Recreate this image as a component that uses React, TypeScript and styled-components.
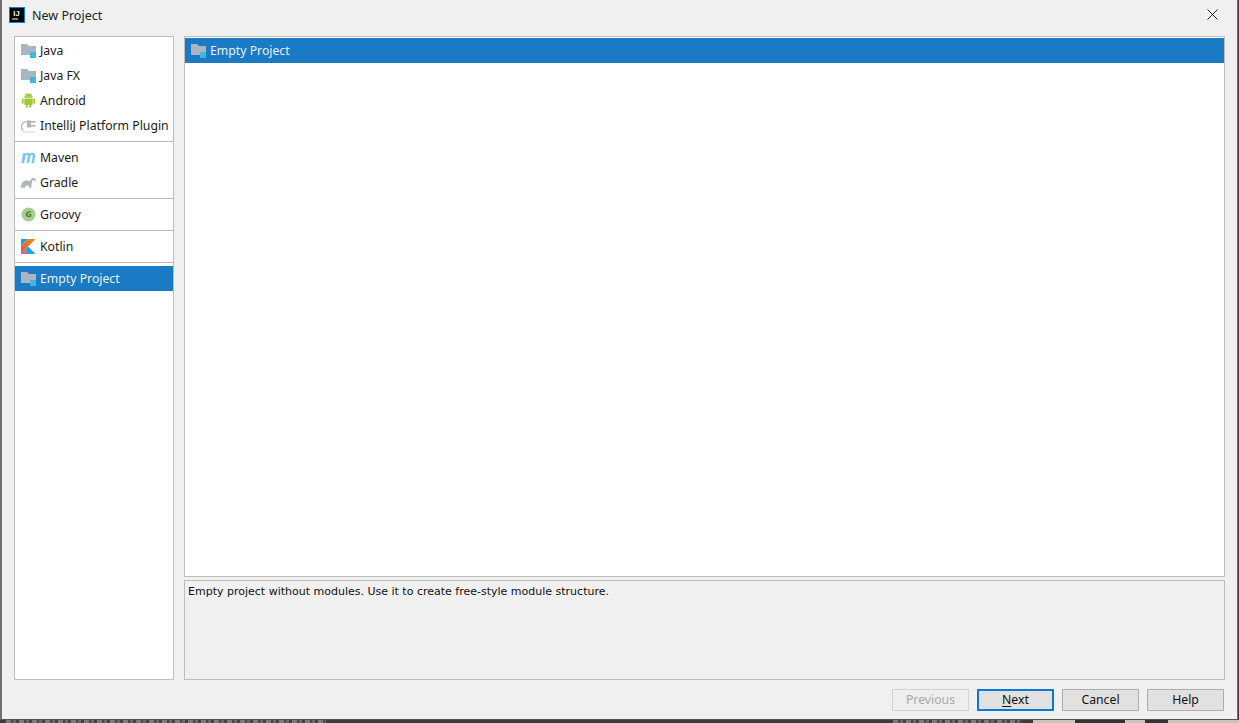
import React from "react";
import styled, { createGlobalStyle } from "styled-components";

const Global = createGlobalStyle`
  html, body { margin: 0; padding: 0; height: 100%; overflow: hidden; background: #3c3c3c; }
  #root { height: 100%; }
`;

const Screen = styled.div`
  width: 1239px;
  height: 723px;
  display: flex;
  flex-direction: column;
  background: #3c3c3c;
  font-family: "Noto Sans", "Open Sans", sans-serif;
  font-size: 12.25px;
  color: #1a1a1a;
`;

const Dialog = styled.div`
  height: 720px;
  box-sizing: border-box;
  margin: 0 1px 0 0;
  display: flex;
  flex-direction: column;
  flex: none;
  background: #f0f0f0;
  border-left: 2px solid #6f6f6f;
  border-right: 1px solid #6f6f6f;
  border-bottom: 1px solid #555;
`;

const TitleBar = styled.div`
  height: 30px;
  display: flex;
  align-items: center;
  padding: 0 19px 0 7px;
  gap: 7px;
  flex: none;
`;

const TitleText = styled.div`
  flex: 1;
  font-size: 12.5px;
  color: #222;
`;

const Main = styled.div`
  display: flex;
  height: 644px;
  padding: 6px 12px 0 12px;
  gap: 10px;
  flex: none;
`;

const SideList = styled.div`
  width: 160px;
  box-sizing: border-box;
  height: 644px;
  background: #fff;
  border: 1px solid #bdbdbd;
  display: flex;
  flex-direction: column;
  flex: none;
`;

const Group = styled.div`
  padding: 1px 0 0;
  display: flex;
  flex-direction: column;
  & + & {
    border-top: 1px solid #b8b8b8;
    margin-top: 3px;
    padding-top: 3px;
  }
`;

const Row = styled.div<{ $selected?: boolean }>`
  height: 25px;
  display: flex;
  align-items: center;
  gap: 4px;
  padding-left: 6px;
  white-space: nowrap;
  background: ${(p) => (p.$selected ? "#1a7ac4" : "transparent")};
  color: ${(p) => (p.$selected ? "#e8f0f6" : "#1a1a1a")};
  svg {
    flex: none;
  }
`;

const Label = styled.span`
  padding-bottom: 1px;
`;

const Right = styled.div`
  flex: 1;
  display: flex;
  flex-direction: column;
  gap: 3px;
  min-width: 0;
`;

const ProjectList = styled.div`
  height: 541px;
  box-sizing: border-box;
  background: #fff;
  border: 1px solid #bdbdbd;
  padding-top: 1px;
  flex: none;
`;

const Description = styled.div`
  flex: 1;
  box-sizing: border-box;
  border: 1px solid #bdbdbd;
  padding: 3px 3px;
  font-family: "DejaVu Sans", sans-serif;
  font-size: 11px;
  line-height: 16px;
  color: #111;
`;

const Footer = styled.div`
  display: flex;
  justify-content: flex-end;
  gap: 8px;
  padding: 9px 13px 0 0;
`;

const Button = styled.div<{ $disabled?: boolean; $default?: boolean }>`
  width: 77px;
  height: 22px;
  box-sizing: border-box;
  display: flex;
  align-items: center;
  justify-content: center;
  padding-bottom: 1px;
  background: ${(p) => (p.$disabled ? "#eeeeee" : "#e1e1e1")};
  color: ${(p) => (p.$disabled ? "#a8a8a8" : "#111")};
  border: ${(p) =>
    p.$default ? "2px solid #0a78d7" : p.$disabled ? "1px solid #d4d4d4" : "1px solid #adadad"};
`;

const Mnemonic = styled.span`
  text-decoration: underline;
  text-underline-offset: 2px;
`;

const Strip = styled.div`
  height: 3px;
  flex: none;
  display: flex;
  overflow: hidden;
  background: #3c3c3c;
`;

const StripGap = styled.div<{ $width: number }>`
  width: ${(p) => p.$width}px;
  flex: none;
`;

const StripMarks = styled.div<{ $width: number }>`
  width: ${(p) => p.$width}px;
  flex: none;
  background: repeating-linear-gradient(90deg, #7c7c7c 0 5px, #484848 5px 7px, #6a6a6a 7px 10px, #444 10px 13px);
`;

const StripLight = styled.div`
  flex: 1;
  background: linear-gradient(
    90deg,
    #c9c5bd 0 42px,
    #333 42px 92px,
    #c9c5bd 92px 112px,
    #333 112px 135px,
    #c9c5bd 135px
  );
`;

const CloseSvg = styled.svg`
  flex: none;
  margin-bottom: 1px;
`;

const LogoSvg = styled.svg`
  flex: none;
`;

const Folder = () => (
  <svg width="15" height="15" viewBox="0 0 15 15">
    <path d="M0 1h6l2 2h7v9H0z" fill="#a9b5bf" />
    <rect x="9" y="9" width="6" height="6" fill="#40b6e0" />
  </svg>
);

const Android = () => (
  <svg width="15" height="15" viewBox="1.200 0.800 12.600 13.800" fill="#a4c639">
    <path d="M3.600 5.200a3.900 3.900 0 0 1 7.800 0z" />
    <path d="M4.800 1l1 1.600M10.200 1l-1 1.600" stroke="#a4c639" strokeWidth=".7" />
    <rect x="3.600" y="5.800" width="7.800" height="6" rx=".8" />
    <rect x="1.400" y="5.800" width="1.600" height="5" rx=".8" />
    <rect x="12" y="5.800" width="1.600" height="5" rx=".8" />
    <rect x="5" y="11" width="1.700" height="3.400" rx=".8" />
    <rect x="8.300" y="11" width="1.700" height="3.400" rx=".8" />
    <circle cx="5.900" cy="3.600" r=".5" fill="#fff" />
    <circle cx="9.100" cy="3.600" r=".5" fill="#fff" />
  </svg>
);

const Plugin = () => (
  <svg width="15" height="15" viewBox="0 0 15 15" fill="none">
    <path d="M6 3.600A5 5 0 0 0 2.400 12.500" stroke="#b4bcc2" strokeWidth="1.300" />
    <path d="M2 14h12" stroke="#cfd4d8" strokeWidth="1" />
    <rect x="6" y="2.500" width="4" height="7" fill="#a9b5bf" />
    <rect x="10" y="3" width="4.500" height="1.600" fill="#a9b5bf" />
    <rect x="10" y="7" width="4.500" height="1.600" fill="#a9b5bf" />
  </svg>
);

const Maven = () => (
  <svg width="15" height="15" viewBox="0 0 15 15" fill="#7cc8ea">
    <path d="M.4 13 2 3h2.400l-.2 1c.8-.9 1.700-1.200 2.500-1.200.9 0 1.600.4 1.900 1.300C9.400 3.200 10.400 2.800 11.400 2.800c1.800 0 3.200 1.100 2.800 3L13 13h-2.500l1.100-6.500c.2-1-.1-1.400-.8-1.400-.7 0-1.300.5-1.500 1.500L8.100 13H5.600l1.100-6.500c.2-1-.1-1.400-.8-1.400-.7 0-1.300.5-1.500 1.500L3.200 13z" />
  </svg>
);

const Gradle = () => (
  <svg width="15" height="15" viewBox="0 0 15 15" fill="#aeb7be">
    <path d="M0 13c0-4 1.500-7 5-7.500 2-.3 3.500.2 4.500.4C10 3.500 11.500 2.500 13 3c1.500.5 2 1.800 1.600 2.700-.5 1-1.400.6-1.700-.2-.4-.7-1.200-.7-1.600.1-.3 1-.3 2.400-.6 3.400-.2 1-.4 2.800-.6 4h-2l-.1-2.500c-1 .4-2.500.4-3.500.1L4 13H2.300l-.3-2.300L1.500 13z" />
  </svg>
);

const Groovy = () => (
  <svg width="15" height="15" viewBox="0 0 15 15">
    <circle cx="7.500" cy="7.500" r="7" fill="#a3d18d" />
    <text
      x="7.500"
      y="10.300"
      fontFamily="DejaVu Sans, sans-serif"
      fontSize="7.500"
      fontWeight="700"
      textAnchor="middle"
      fill="#4d6b45"
    >
      G
    </text>
  </svg>
);

const Kotlin = () => (
  <svg width="15" height="15" viewBox="0 0 15 15">
    <defs>
      <linearGradient id="kotlinTop" x1="0" y1="1" x2="1" y2="0">
        <stop offset="0" stopColor="#e8554e" />
        <stop offset="1" stopColor="#f88909" />
      </linearGradient>
      <linearGradient id="kotlinLow" x1="0" y1="1" x2="0.300" y2="0">
        <stop offset="0" stopColor="#c757bc" />
        <stop offset="1" stopColor="#f07a5a" />
      </linearGradient>
    </defs>
    <path d="M0 0h7L0 7z" fill="#18a0e8" />
    <path d="M7 0h7.500L0 14.500V7z" fill="url(#kotlinTop)" />
    <path d="M7.200 7.400 14.500 15H0v-.5z" fill="#18a8f0" />
    <path d="M0 15V14.500L4 10.500 7 15z" fill="url(#kotlinLow)" />
  </svg>
);

const AppLogo = () => (
  <LogoSvg width="16" height="16" viewBox="0 0 16 16">
    <rect x=".5" y=".5" width="15" height="15" fill="#000" stroke="#0a7fe0" />
    <text x="7.500" y="9" fontFamily="Liberation Sans, sans-serif" fontSize="7.500" fontWeight="700" textAnchor="middle" fill="#fff">
      IJ
    </text>
    <rect x="3" y="11.500" width="6" height="1" fill="#fff" />
  </LogoSvg>
);

const CloseIcon = () => (
  <CloseSvg width="11" height="11" viewBox="0 0 11 11" stroke="#222" strokeWidth="1" fill="none">
    <path d="M.5.500l10 10M10.500.500l-10 10" />
  </CloseSvg>
);

export default function App() {
  return (
    <Screen>
      <Global />
      <Dialog>
        <TitleBar>
          <AppLogo />
          <TitleText>New Project</TitleText>
          <CloseIcon />
        </TitleBar>
        <Main>
          <SideList>
            <Group>
              <Row><Folder /><Label>Java</Label></Row>
              <Row><Folder /><Label>Java FX</Label></Row>
              <Row><Android /><Label>Android</Label></Row>
              <Row><Plugin /><Label>IntelliJ Platform Plugin</Label></Row>
            </Group>
            <Group>
              <Row><Maven /><Label>Maven</Label></Row>
              <Row><Gradle /><Label>Gradle</Label></Row>
            </Group>
            <Group>
              <Row><Groovy /><Label>Groovy</Label></Row>
            </Group>
            <Group>
              <Row><Kotlin /><Label>Kotlin</Label></Row>
            </Group>
            <Group>
              <Row $selected><Folder /><Label>Empty Project</Label></Row>
            </Group>
          </SideList>
          <Right>
            <ProjectList>
              <Row $selected><Folder /><Label>Empty Project</Label></Row>
            </ProjectList>
            <Description>Empty project without modules. Use it to create free-style module structure.</Description>
          </Right>
        </Main>
        <Footer>
          <Button $disabled>Previous</Button>
          <Button $default><span><Mnemonic>N</Mnemonic>ext</span></Button>
          <Button>Cancel</Button>
          <Button>Help</Button>
        </Footer>
      </Dialog>
      <Strip>
        <StripGap $width={6} />
        <StripMarks $width={320} />
        <StripGap $width={567} />
        <StripMarks $width={130} />
        <StripGap $width={10} />
        <StripLight />
      </Strip>
    </Screen>
  );
}
